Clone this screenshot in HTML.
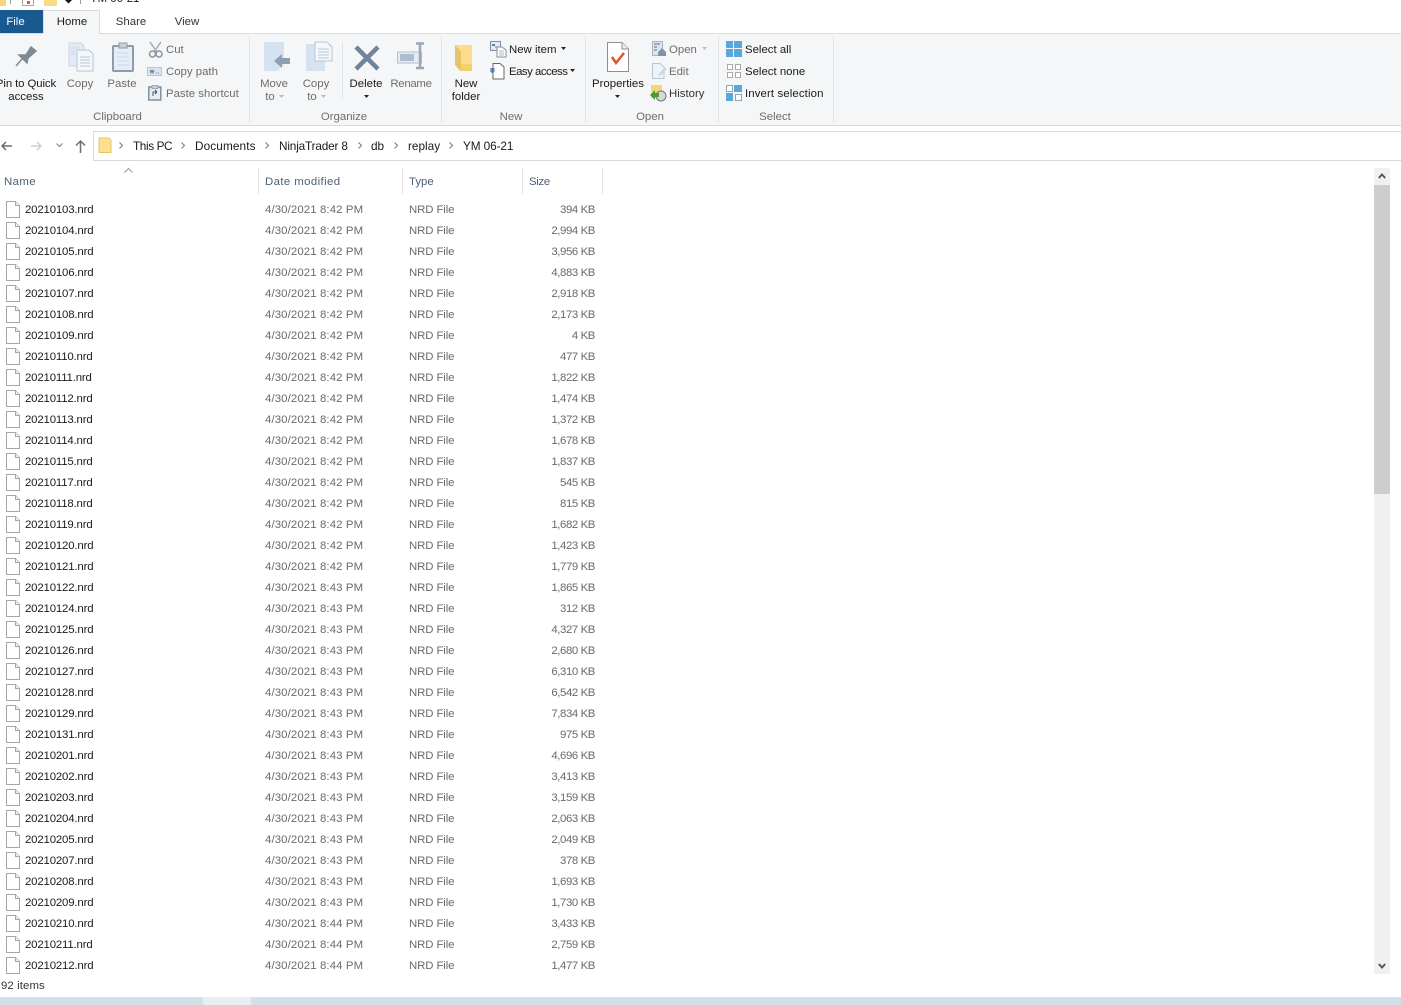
<!DOCTYPE html>
<html lang="en"><head><meta charset="utf-8"><title>YM 06-21</title>
<style>
html,body{margin:0;padding:0;background:#fff}
body{width:1401px;height:1005px;position:relative;overflow:hidden;font-family:"Liberation Sans",sans-serif;font-size:11.4px;color:#1a1a1a}
.a{position:absolute;white-space:nowrap;line-height:14px}
.g{color:#6d6d6d}.c{text-align:center}
.box{position:absolute}
svg{position:absolute;overflow:visible}
.r{position:absolute;left:0;width:610px;height:21px;line-height:23px}
.r span{position:absolute;white-space:nowrap;color:#6a6a6a}
.r .n{left:25px;color:#1a1a1a;letter-spacing:-.16px}.r .d{left:265px;letter-spacing:.01em}.r .t{left:409px;letter-spacing:-.1px}.r .s{right:15px;text-align:right;letter-spacing:-.4px}
.r svg{left:6px;top:2px}
.h{position:absolute;top:175px;line-height:14px;color:#4c607a}
.sep{position:absolute;top:168px;height:26px;width:1px;background:#e5e5e5}
.cr{position:absolute;top:142px;width:4px;height:7px}
</style></head><body>
<svg width="0" height="0"><defs><symbol id="f" viewBox="0 0 14 17"><path d="M.5.5H9.500L13.500 4.500V16.500H.5Z" fill="#fff" stroke="#a6a6a6"/><path d="M9.500.5V4.500H13.500" fill="#f0f0f0" stroke="#a6a6a6"/></symbol></defs></svg>

<!-- title bar remnants -->
<div class="box" style="left:0;top:0;width:6px;height:6px;background:#f5d77f"></div>
<div class="box" style="left:10px;top:0;width:1px;height:4px;background:#999"></div>
<div class="box" style="left:22px;top:0;width:12px;height:6px;background:#fff;border:1px solid #aaa;border-top:0;box-sizing:border-box"></div>
<div class="box" style="left:27px;top:1px;width:3px;height:3px;background:#d9583a"></div>
<div class="box" style="left:44px;top:0;width:13px;height:6px;background:#f8dc85"></div>
<svg style="left:65px;top:0" width="8" height="4"><path d="M0 0H7L3.500 3.500Z" fill="#111"/></svg>
<div class="box" style="left:80px;top:0;width:1px;height:4px;background:#999"></div>
<div class="a" style="left:90px;top:-8px">YM 06-21</div>

<!-- tabs -->
<div class="box" style="left:0;top:10px;width:43px;height:23px;background:#19598f"></div>
<div class="a c" style="left:0;width:31px;top:15px;color:#fff">File</div>
<div class="box" style="left:0;top:33px;width:1401px;height:1px;background:#dadbdc"></div>
<div class="box" style="left:43px;top:10px;width:57px;height:24px;background:#f5f6f7;border:1px solid #dadbdc;border-bottom:0;box-sizing:border-box"></div>
<div class="a c" style="left:43px;width:58px;top:15px">Home</div>
<div class="a c" style="left:101px;width:60px;top:15px;color:#333">Share</div>
<div class="a c" style="left:160px;width:54px;top:15px;color:#333">View</div>

<!-- ribbon -->
<div class="box" style="left:0;top:34px;width:1401px;height:91px;background:#f5f6f7;border-bottom:1px solid #dadbdc"></div>
<div class="box" style="left:249px;top:36px;width:1px;height:87px;background:#e2e3e4"></div>
<div class="box" style="left:441px;top:36px;width:1px;height:87px;background:#e2e3e4"></div>
<div class="box" style="left:585px;top:36px;width:1px;height:87px;background:#e2e3e4"></div>
<div class="box" style="left:718px;top:36px;width:1px;height:87px;background:#e2e3e4"></div>
<div class="box" style="left:833px;top:36px;width:1px;height:87px;background:#e2e3e4"></div>
<div class="box" style="left:342px;top:42px;width:1px;height:56px;background:#e2e3e4"></div>

<!-- Pin -->
<svg style="left:15px;top:46px" width="22" height="22"><path d="M11 9 16 1 21 5 13 12 12 17 4 9ZM7 13 1 20" fill="#7f8a94" stroke="#7f8a94" stroke-width="1.500"/></svg>
<div class="a c" style="left:-8px;width:68px;top:77px;letter-spacing:-.1px">Pin to Quick</div>
<div class="a c" style="left:-8px;width:68px;top:90px">access</div>
<!-- Copy -->
<svg style="left:68px;top:42px" width="26" height="30"><path d="M1 1H13L16 4V24H1Z" fill="#e2eaf4" stroke="#c9d5e3"/><path d="M9 8H21L25 12V29H9Z" fill="#f4f7fb" stroke="#b9c6d6"/><path d="M12 15H22M12 18H22M12 21H22M12 24H22" stroke="#b9c6d6"/><path d="M3 6H11M3 9H7M3 12H7" stroke="#c9d5e3"/></svg>
<div class="a c g" style="left:60px;width:40px;top:77px">Copy</div>
<!-- Paste -->
<svg style="left:112px;top:42px" width="22" height="30"><rect x="1" y="4" width="20" height="25" rx="1" fill="#e6edf6" stroke="#8d9cab" stroke-width="2"/><rect x="7" y="1" width="8" height="5" fill="#c9d2dc" stroke="#8d9cab"/><path d="M5 11H17M5 15H17M5 19H17M5 23H17" stroke="#ccd8e8"/></svg>
<div class="a c g" style="left:102px;width:40px;top:77px">Paste</div>
<!-- Cut etc -->
<svg style="left:148px;top:41px" width="16" height="17"><path d="M2 1 9 11M13 1 6 11" stroke="#aab2ba" stroke-width="1.600" fill="none"/><circle cx="4.500" cy="13" r="3" fill="none" stroke="#8794a1" stroke-width="1.500"/><circle cx="11" cy="13" r="3" fill="none" stroke="#8794a1" stroke-width="1.500"/></svg>
<div class="a g" style="left:166px;top:43px">Cut</div>
<svg style="left:147px;top:67px" width="15" height="9"><rect x=".5" y=".5" width="14" height="8" fill="#dbe4f0" stroke="#b9c6d6"/><path d="M3 3 4 6 5 3 6 6 7 3M9 6H10M11 6H12" stroke="#5a6f8c" fill="none" stroke-width=".8"/></svg>
<div class="a g" style="left:166px;top:65px">Copy path</div>
<svg style="left:148px;top:85px" width="14" height="16"><rect x=".8" y="2" width="12" height="13" fill="#e8eef6" stroke="#7e8fa2" stroke-width="1.500"/><rect x="4" y=".5" width="6" height="3" fill="#c9d2dc" stroke="#7e8fa2" stroke-width=".7"/><path d="M5 11V7H9M9 7 7 5M9 7 7 9" stroke="#44566b" fill="none"/></svg>
<div class="a g" style="left:166px;top:87px">Paste shortcut</div>
<div class="a g c" style="left:60px;width:115px;top:110px">Clipboard</div>

<!-- Organize -->
<svg style="left:263px;top:42px" width="28" height="30"><path d="M1 0H21V23L14 29H1Z" fill="#d5e2f0"/><path d="M11 19 19 12V16H27V22H19V26Z" fill="#8d9fb2"/></svg>
<div class="a c g" style="left:254px;width:40px;top:77px">Move</div>
<div class="a c g" style="left:250px;width:40px;top:90px">to</div>
<svg style="left:279px;top:95px" width="5" height="3"><path d="M0 0H5L2.500 3Z" fill="#b9b9b9"/></svg>
<svg style="left:305px;top:41px" width="28" height="30"><path d="M1 3H20V30H1Z" fill="#d5e2f0"/><path d="M10 1H22L27 6V20H10Z" fill="#f4f7fb" stroke="#b9c6d6"/><path d="M13 8H24M13 11H24M13 14H24M13 17H24" stroke="#b9c6d6"/></svg>
<div class="a c g" style="left:296px;width:40px;top:77px">Copy</div>
<div class="a c g" style="left:292px;width:40px;top:90px">to</div>
<svg style="left:321px;top:95px" width="5" height="3"><path d="M0 0H5L2.500 3Z" fill="#b9b9b9"/></svg>
<svg style="left:354px;top:45px" width="26" height="26"><path d="M2 2 24 24M24 2 2 24" stroke="#71849b" stroke-width="4.500"/></svg>
<div class="a c" style="left:346px;width:40px;top:77px">Delete</div>
<svg style="left:364px;top:95px" width="5" height="3"><path d="M0 0H5L2.500 3Z" fill="#222"/></svg>
<svg style="left:397px;top:43px" width="30" height="27"><rect x=".5" y="9" width="24" height="11" fill="#e4ebf4" stroke="#b3c0cf"/><rect x="3" y="11" width="14" height="7" fill="#aebccd"/><path d="M19 .5H27M19 25H27M23 1V25" stroke="#98a6b5" stroke-width="2.500"/></svg>
<div class="a c g" style="left:386px;width:50px;top:77px;letter-spacing:-.3px">Rename</div>
<div class="a g c" style="left:300px;width:88px;top:110px">Organize</div>

<!-- New -->
<svg style="left:454px;top:44px" width="22" height="28"><path d="M1 1H18V27L6 27 1 21Z" fill="#fbdc8a"/><path d="M1 1 7 8V27L1 21Z" fill="#e8c264"/><path d="M7 20H18V27H7Z" fill="#f4cf6d"/></svg>
<div class="a c" style="left:441px;width:50px;top:77px">New</div>
<div class="a c" style="left:441px;width:50px;top:90px">folder</div>
<svg style="left:490px;top:41px" width="17" height="17"><rect x=".5" y=".5" width="10" height="9" fill="#e4ebf4" stroke="#7e8fa2"/><path d="M2 3H5V5H2Z" fill="#5e85b0"/><path d="M5 6H12L16 9V16H7V6" fill="#fff" stroke="#7e8fa2"/><path d="M9 10H14M9 12H14M9 14H14" stroke="#a9b9cc"/></svg>
<div class="a" style="left:509px;top:43px">New item</div>
<svg style="left:561px;top:47px" width="5" height="3"><path d="M0 0H5L2.500 3Z" fill="#222"/></svg>
<svg style="left:490px;top:63px" width="15" height="17"><path d="M3 .5H10L14 4V16H3Z" fill="#fff" stroke="#666"/><path d="M0 6H5M0 8H5M2 5V10" stroke="#3c6ea8" fill="none"/></svg>
<div class="a" style="left:509px;top:65px;letter-spacing:-.5px">Easy access</div>
<svg style="left:570px;top:69px" width="5" height="3"><path d="M0 0H5L2.500 3Z" fill="#222"/></svg>
<div class="a g c" style="left:488px;width:46px;top:110px">New</div>

<!-- Open -->
<svg style="left:607px;top:42px" width="22" height="30"><path d="M.5.5H15L21.500 7V29.500H.5Z" fill="#fff" stroke="#8f8f8f"/><path d="M15 .5V7H21.500" fill="#eee" stroke="#8f8f8f"/><path d="M5 15 9 21 17 11" fill="none" stroke="#d9582b" stroke-width="2.500"/></svg>
<div class="a c" style="left:588px;width:60px;top:77px">Properties</div>
<svg style="left:615px;top:95px" width="5" height="3"><path d="M0 0H5L2.500 3Z" fill="#222"/></svg>
<svg style="left:652px;top:41px" width="15" height="17"><rect x=".5" y=".5" width="10" height="14" fill="#dfe5ec" stroke="#aab4c0"/><path d="M2 3H8M2 6H5M2 9H5" stroke="#8597ab" stroke-width="1.500"/><path d="M6 15V11L10 7 14 11V15Z" fill="#7f93a9"/></svg>
<div class="a g" style="left:669px;top:43px">Open</div>
<svg style="left:702px;top:47px" width="5" height="3"><path d="M0 0H5L2.500 3Z" fill="#bbb"/></svg>
<svg style="left:652px;top:63px" width="15" height="16"><path d="M.5.5H8L12 4V15.500H.5Z" fill="#eef3f9" stroke="#b9c6d6"/><path d="M6 12 13 4 15 6 8 13Z" fill="#c9d6e6"/></svg>
<div class="a g" style="left:669px;top:65px">Edit</div>
<svg style="left:650px;top:85px" width="17" height="17"><rect x="1" y="0" width="11" height="13" fill="#f4d876"/><circle cx="11" cy="11" r="5" fill="#d8d8d8" stroke="#777"/><path d="M0 10 5 5V8H9V12H5V15Z" fill="#4f9a35"/></svg>
<div class="a" style="left:669px;top:87px;color:#333">History</div>
<div class="a g c" style="left:625px;width:50px;top:110px">Open</div>

<!-- Select -->
<svg style="left:726px;top:41px" width="16" height="16"><path d="M0 0H7V7H0ZM8 0H16V7H8ZM0 8H7V16H0ZM8 8H16V16H8Z" fill="#5ba7dd"/></svg>
<div class="a" style="left:745px;top:43px">Select all</div>
<svg style="left:727px;top:64px" width="14" height="14" fill="#fff" stroke="#aaa"><rect x=".5" y=".5" width="5" height="5"/><rect x="8.500" y=".5" width="5" height="5"/><rect x=".5" y="8.500" width="5" height="5"/><rect x="8.500" y="8.500" width="5" height="5"/></svg>
<div class="a" style="left:745px;top:65px">Select none</div>
<svg style="left:726px;top:85px" width="16" height="16"><rect x=".5" y=".5" width="6" height="6" fill="#fff" stroke="#8aa"/><rect x="8" y="0" width="8" height="7" fill="#5ba7dd"/><rect x="0" y="8" width="7" height="8" fill="#5ba7dd"/><rect x="9.500" y="9.500" width="6" height="6" fill="#fff" stroke="#8aa"/></svg>
<div class="a" style="left:745px;top:87px;letter-spacing:.12px">Invert selection</div>
<div class="a g c" style="left:750px;width:50px;top:110px">Select</div>

<!-- Nav -->
<svg style="left:1px;top:141px" width="12" height="10"><path d="M11 5H1M5 1 1 5 5 9" stroke="#6e6e6e" stroke-width="1.500" fill="none"/></svg>
<svg style="left:30px;top:141px" width="12" height="10"><path d="M1 5H11M7 1 11 5 7 9" stroke="#d0d0d0" stroke-width="1.500" fill="none"/></svg>
<svg style="left:56px;top:143px" width="7" height="5"><path d="M.5.5 3.500 3.500 6.500.5" stroke="#888" stroke-width="1.200" fill="none"/></svg>
<svg style="left:75px;top:140px" width="11" height="13"><path d="M5.500 13V1M1 5.500 5.500 1 10 5.500" stroke="#6e6e6e" stroke-width="1.500" fill="none"/></svg>
<div class="box" style="left:93px;top:131px;width:1308px;height:30px;border:1px solid #d9d9d9;border-right:0;box-sizing:border-box"></div>
<svg style="left:98px;top:137px" width="14" height="17"><path d="M1 1H11L13 3V15.500H1Z" fill="#fbe08e" stroke="#e3c56a"/></svg>
<svg class="cr" style="left:119px"><path d="M.5.5 3.500 3.500.5 6.500" stroke="#777" fill="none"/></svg>
<div class="a" style="left:133px;top:139px;font-size:11.8px;letter-spacing:-.4px">This PC</div>
<svg class="cr" style="left:181px"><path d="M.5.5 3.500 3.500.5 6.500" stroke="#777" fill="none"/></svg>
<div class="a" style="left:195px;top:139px;font-size:11.8px;letter-spacing:.1px">Documents</div>
<svg class="cr" style="left:265px"><path d="M.5.5 3.500 3.500.5 6.500" stroke="#777" fill="none"/></svg>
<div class="a" style="left:279px;top:139px;font-size:11.8px;letter-spacing:-.17px">NinjaTrader 8</div>
<svg class="cr" style="left:358px"><path d="M.5.5 3.500 3.500.5 6.500" stroke="#777" fill="none"/></svg>
<div class="a" style="left:371px;top:139px;font-size:11.8px">db</div>
<svg class="cr" style="left:394px"><path d="M.5.5 3.500 3.500.5 6.500" stroke="#777" fill="none"/></svg>
<div class="a" style="left:408px;top:139px;font-size:11.8px">replay</div>
<svg class="cr" style="left:449px"><path d="M.5.5 3.500 3.500.5 6.500" stroke="#777" fill="none"/></svg>
<div class="a" style="left:463px;top:139px;font-size:11.8px;letter-spacing:-.1px">YM 06-21</div>

<!-- Headers -->
<svg style="left:124px;top:168px" width="9" height="5"><path d="M.5 4.500 4.500.5 8.500 4.500" stroke="#999" fill="none"/></svg>
<div class="h" style="left:4px;letter-spacing:.4px">Name</div>
<div class="sep" style="left:258px"></div><div class="h" style="left:265px;letter-spacing:.4px">Date modified</div>
<div class="sep" style="left:402px"></div><div class="h" style="left:409px">Type</div>
<div class="sep" style="left:522px"></div><div class="h" style="left:529px;letter-spacing:-.3px">Size</div>
<div class="sep" style="left:602px"></div>

<!-- Rows -->
<div class="r" style="top:199px"><svg width="14" height="17"><use href="#f"/></svg><span class="n">20210103.nrd</span><span class="d">4/30/2021 8:42 PM</span><span class="t">NRD File</span><span class="s">394 KB</span></div>
<div class="r" style="top:220px"><svg width="14" height="17"><use href="#f"/></svg><span class="n">20210104.nrd</span><span class="d">4/30/2021 8:42 PM</span><span class="t">NRD File</span><span class="s">2,994 KB</span></div>
<div class="r" style="top:241px"><svg width="14" height="17"><use href="#f"/></svg><span class="n">20210105.nrd</span><span class="d">4/30/2021 8:42 PM</span><span class="t">NRD File</span><span class="s">3,956 KB</span></div>
<div class="r" style="top:262px"><svg width="14" height="17"><use href="#f"/></svg><span class="n">20210106.nrd</span><span class="d">4/30/2021 8:42 PM</span><span class="t">NRD File</span><span class="s">4,883 KB</span></div>
<div class="r" style="top:283px"><svg width="14" height="17"><use href="#f"/></svg><span class="n">20210107.nrd</span><span class="d">4/30/2021 8:42 PM</span><span class="t">NRD File</span><span class="s">2,918 KB</span></div>
<div class="r" style="top:304px"><svg width="14" height="17"><use href="#f"/></svg><span class="n">20210108.nrd</span><span class="d">4/30/2021 8:42 PM</span><span class="t">NRD File</span><span class="s">2,173 KB</span></div>
<div class="r" style="top:325px"><svg width="14" height="17"><use href="#f"/></svg><span class="n">20210109.nrd</span><span class="d">4/30/2021 8:42 PM</span><span class="t">NRD File</span><span class="s">4 KB</span></div>
<div class="r" style="top:346px"><svg width="14" height="17"><use href="#f"/></svg><span class="n">20210110.nrd</span><span class="d">4/30/2021 8:42 PM</span><span class="t">NRD File</span><span class="s">477 KB</span></div>
<div class="r" style="top:367px"><svg width="14" height="17"><use href="#f"/></svg><span class="n">20210111.nrd</span><span class="d">4/30/2021 8:42 PM</span><span class="t">NRD File</span><span class="s">1,822 KB</span></div>
<div class="r" style="top:388px"><svg width="14" height="17"><use href="#f"/></svg><span class="n">20210112.nrd</span><span class="d">4/30/2021 8:42 PM</span><span class="t">NRD File</span><span class="s">1,474 KB</span></div>
<div class="r" style="top:409px"><svg width="14" height="17"><use href="#f"/></svg><span class="n">20210113.nrd</span><span class="d">4/30/2021 8:42 PM</span><span class="t">NRD File</span><span class="s">1,372 KB</span></div>
<div class="r" style="top:430px"><svg width="14" height="17"><use href="#f"/></svg><span class="n">20210114.nrd</span><span class="d">4/30/2021 8:42 PM</span><span class="t">NRD File</span><span class="s">1,678 KB</span></div>
<div class="r" style="top:451px"><svg width="14" height="17"><use href="#f"/></svg><span class="n">20210115.nrd</span><span class="d">4/30/2021 8:42 PM</span><span class="t">NRD File</span><span class="s">1,837 KB</span></div>
<div class="r" style="top:472px"><svg width="14" height="17"><use href="#f"/></svg><span class="n">20210117.nrd</span><span class="d">4/30/2021 8:42 PM</span><span class="t">NRD File</span><span class="s">545 KB</span></div>
<div class="r" style="top:493px"><svg width="14" height="17"><use href="#f"/></svg><span class="n">20210118.nrd</span><span class="d">4/30/2021 8:42 PM</span><span class="t">NRD File</span><span class="s">815 KB</span></div>
<div class="r" style="top:514px"><svg width="14" height="17"><use href="#f"/></svg><span class="n">20210119.nrd</span><span class="d">4/30/2021 8:42 PM</span><span class="t">NRD File</span><span class="s">1,682 KB</span></div>
<div class="r" style="top:535px"><svg width="14" height="17"><use href="#f"/></svg><span class="n">20210120.nrd</span><span class="d">4/30/2021 8:42 PM</span><span class="t">NRD File</span><span class="s">1,423 KB</span></div>
<div class="r" style="top:556px"><svg width="14" height="17"><use href="#f"/></svg><span class="n">20210121.nrd</span><span class="d">4/30/2021 8:42 PM</span><span class="t">NRD File</span><span class="s">1,779 KB</span></div>
<div class="r" style="top:577px"><svg width="14" height="17"><use href="#f"/></svg><span class="n">20210122.nrd</span><span class="d">4/30/2021 8:43 PM</span><span class="t">NRD File</span><span class="s">1,865 KB</span></div>
<div class="r" style="top:598px"><svg width="14" height="17"><use href="#f"/></svg><span class="n">20210124.nrd</span><span class="d">4/30/2021 8:43 PM</span><span class="t">NRD File</span><span class="s">312 KB</span></div>
<div class="r" style="top:619px"><svg width="14" height="17"><use href="#f"/></svg><span class="n">20210125.nrd</span><span class="d">4/30/2021 8:43 PM</span><span class="t">NRD File</span><span class="s">4,327 KB</span></div>
<div class="r" style="top:640px"><svg width="14" height="17"><use href="#f"/></svg><span class="n">20210126.nrd</span><span class="d">4/30/2021 8:43 PM</span><span class="t">NRD File</span><span class="s">2,680 KB</span></div>
<div class="r" style="top:661px"><svg width="14" height="17"><use href="#f"/></svg><span class="n">20210127.nrd</span><span class="d">4/30/2021 8:43 PM</span><span class="t">NRD File</span><span class="s">6,310 KB</span></div>
<div class="r" style="top:682px"><svg width="14" height="17"><use href="#f"/></svg><span class="n">20210128.nrd</span><span class="d">4/30/2021 8:43 PM</span><span class="t">NRD File</span><span class="s">6,542 KB</span></div>
<div class="r" style="top:703px"><svg width="14" height="17"><use href="#f"/></svg><span class="n">20210129.nrd</span><span class="d">4/30/2021 8:43 PM</span><span class="t">NRD File</span><span class="s">7,834 KB</span></div>
<div class="r" style="top:724px"><svg width="14" height="17"><use href="#f"/></svg><span class="n">20210131.nrd</span><span class="d">4/30/2021 8:43 PM</span><span class="t">NRD File</span><span class="s">975 KB</span></div>
<div class="r" style="top:745px"><svg width="14" height="17"><use href="#f"/></svg><span class="n">20210201.nrd</span><span class="d">4/30/2021 8:43 PM</span><span class="t">NRD File</span><span class="s">4,696 KB</span></div>
<div class="r" style="top:766px"><svg width="14" height="17"><use href="#f"/></svg><span class="n">20210202.nrd</span><span class="d">4/30/2021 8:43 PM</span><span class="t">NRD File</span><span class="s">3,413 KB</span></div>
<div class="r" style="top:787px"><svg width="14" height="17"><use href="#f"/></svg><span class="n">20210203.nrd</span><span class="d">4/30/2021 8:43 PM</span><span class="t">NRD File</span><span class="s">3,159 KB</span></div>
<div class="r" style="top:808px"><svg width="14" height="17"><use href="#f"/></svg><span class="n">20210204.nrd</span><span class="d">4/30/2021 8:43 PM</span><span class="t">NRD File</span><span class="s">2,063 KB</span></div>
<div class="r" style="top:829px"><svg width="14" height="17"><use href="#f"/></svg><span class="n">20210205.nrd</span><span class="d">4/30/2021 8:43 PM</span><span class="t">NRD File</span><span class="s">2,049 KB</span></div>
<div class="r" style="top:850px"><svg width="14" height="17"><use href="#f"/></svg><span class="n">20210207.nrd</span><span class="d">4/30/2021 8:43 PM</span><span class="t">NRD File</span><span class="s">378 KB</span></div>
<div class="r" style="top:871px"><svg width="14" height="17"><use href="#f"/></svg><span class="n">20210208.nrd</span><span class="d">4/30/2021 8:43 PM</span><span class="t">NRD File</span><span class="s">1,693 KB</span></div>
<div class="r" style="top:892px"><svg width="14" height="17"><use href="#f"/></svg><span class="n">20210209.nrd</span><span class="d">4/30/2021 8:43 PM</span><span class="t">NRD File</span><span class="s">1,730 KB</span></div>
<div class="r" style="top:913px"><svg width="14" height="17"><use href="#f"/></svg><span class="n">20210210.nrd</span><span class="d">4/30/2021 8:44 PM</span><span class="t">NRD File</span><span class="s">3,433 KB</span></div>
<div class="r" style="top:934px"><svg width="14" height="17"><use href="#f"/></svg><span class="n">20210211.nrd</span><span class="d">4/30/2021 8:44 PM</span><span class="t">NRD File</span><span class="s">2,759 KB</span></div>
<div class="r" style="top:955px"><svg width="14" height="17"><use href="#f"/></svg><span class="n">20210212.nrd</span><span class="d">4/30/2021 8:44 PM</span><span class="t">NRD File</span><span class="s">1,477 KB</span></div>

<!-- Scrollbar -->
<div class="box" style="left:1374px;top:168px;width:16px;height:806px;background:#f0f0f0"></div>
<div class="box" style="left:1374px;top:185px;width:16px;height:309px;background:#cdcdcd"></div>
<svg style="left:1378px;top:173px" width="8" height="6"><path d="M.8 5 4 1.500 7.200 5" stroke="#505050" stroke-width="1.800" fill="none"/></svg>
<svg style="left:1378px;top:963px" width="8" height="6"><path d="M.8 1 4 4.500 7.200 1" stroke="#505050" stroke-width="1.800" fill="none"/></svg>

<!-- Status -->
<div class="a" style="left:1px;top:979px;color:#333;letter-spacing:.1px">92 items</div>
<div class="box" style="left:0;top:997px;width:1401px;height:8px;background:#d3dfe9"></div>
<div class="box" style="left:203px;top:997px;width:48px;height:8px;background:#e9eef3"></div>
</body></html>
